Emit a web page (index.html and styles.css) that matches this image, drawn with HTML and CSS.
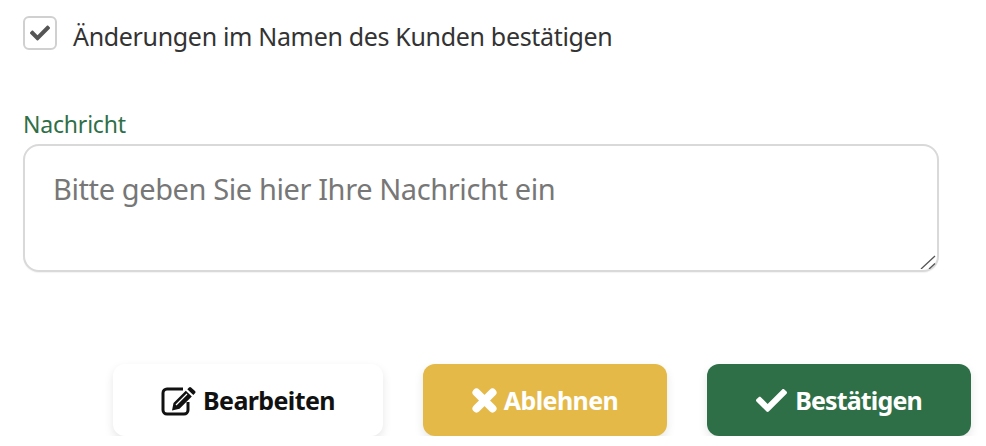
FILE: index.html
```html
<!DOCTYPE html>
<html lang="de">
<head>
    <title>Änderungen bestätigen</title>
    <link rel="stylesheet" href="styles.css">
</head>
<body>
    <label class="confirm-row">
        <span class="check-box">
            <svg viewBox="0 0 512 512" width="20" height="20"><path fill="#555" d="M173.900 439.400 7.500 273c-10-10-10-26.200 0-36.200l36.200-36.200c10-10 26.200-10 36.200 0L192 312.700 432.100 72.600c10-10 26.200-10 36.200 0l36.200 36.200c10 10 10 26.200 0 36.200L210.100 439.400c-10 10-26.200 10-36.200 0z"/></svg>
        </span>
        <span class="confirm-text">Änderungen im Namen des Kunden bestätigen</span>
    </label>

    <div class="message-field">
        <label class="field-label" for="message">Nachricht</label>
        <div class="textarea-wrap">
            <textarea id="message" placeholder="Bitte geben Sie hier Ihre Nachricht ein"></textarea>
            <svg class="grip" viewBox="0 0 16 14" width="16" height="14"><path stroke="#555" stroke-width="1.300" d="M1 14 15 1M9 14l6-5.500"/></svg>
        </div>
    </div>

    <div class="actions">
        <button class="btn btn-edit">
            <svg viewBox="0 0 35 31" width="35" height="31">
                <path fill="none" stroke="#111" stroke-width="3" d="M22 4H6a4 4 0 0 0-4 4v17a4 4 0 0 0 4 4h17a4 4 0 0 0 4-4V17"/>
                <path fill="#111" d="M28 2.500a1.500 1.500 0 0 1 2.100 0l3.900 3.600a1.500 1.500 0 0 1 0 2.100l-1.700 1.700-6-5.700zM24.800 5.700l6 5.700L18.500 23.700l-7.500 1.800 1.500-7.500z"/>
                <path stroke="#fff" stroke-width="1.200" d="M15 20 26 9"/>
            </svg>
            Bearbeiten
        </button>
        <button class="btn btn-reject">
            <svg viewBox="0 0 25 25" width="25" height="25"><path stroke="#fff" stroke-width="8" stroke-linecap="round" d="M4.500 4.500l16 16M20.500 4.500l-16 16"/></svg>
            Ablehnen
        </button>
        <button class="btn btn-confirm">
            <svg viewBox="0 0 512 512" width="31" height="31"><path fill="#fff" d="M173.900 439.400 7.500 273c-10-10-10-26.200 0-36.200l36.200-36.200c10-10 26.200-10 36.200 0L192 312.700 432.100 72.600c10-10 26.200-10 36.200 0l36.200 36.200c10 10 10 26.200 0 36.200L210.100 439.400c-10 10-26.200 10-36.200 0z"/></svg>
            Bestätigen
        </button>
    </div>
</body>
</html>
```

FILE: styles.css
```css
:root {
    --green: #2f6f47;
    --yellow: #e4b947;
    --text-color: #333333;
    --border-color: #d9d9d9;
}

body {
    font-family: "Noto Sans", "Open Sans", sans-serif;
    color: var(--text-color);
    margin: 0;
    padding: 16px 15px 0 23px;
    background-color: #FFF;
}

.confirm-row {
    display: flex;
    align-items: center;
    gap: 16px;
    height: 34px;
}

.check-box {
    width: 34px;
    height: 34px;
    box-sizing: border-box;
    border: 2px solid #d0d0d0;
    border-radius: 6px;
    display: flex;
    align-items: center;
    justify-content: center;
}

.confirm-text {
    font-size: 25px;
    letter-spacing: -0.33px;
    white-space: nowrap;
    padding-top: 5px;
}

.message-field {
    margin-top: 59px;
    width: 916px;
}

.field-label {
    display: block;
    color: var(--green);
    font-size: 23px;
    letter-spacing: -0.2px;
    line-height: 30px;
}

.textarea-wrap {
    position: relative;
    margin-top: 5px;
}

textarea {
    display: block;
    width: 100%;
    height: 128px;
    box-sizing: border-box;
    padding: 25px 28px;
    border: 2px solid var(--border-color);
    border-radius: 16px;
    outline: none;
    resize: none;
    font-family: inherit;
    font-size: 29px;
    letter-spacing: -0.4px;
    line-height: 36px;
    box-shadow: 0 1px 1px rgba(0,0,0,0.05);
}

textarea::placeholder {
    color: #777777;
}

.grip {
    position: absolute;
    right: 3px;
    bottom: 3px;
}

.actions {
    display: flex;
    justify-content: flex-end;
    gap: 40px;
    width: 948px;
    margin-top: 92px;
}

.btn {
    display: flex;
    align-items: center;
    justify-content: center;
    gap: 7px;
    height: 72px;
    border: none;
    border-radius: 12px;
    font-family: inherit;
    font-size: 25px;
    font-weight: 700;
    letter-spacing: -0.6px;
    box-shadow: 0 4px 10px rgba(0,0,0,0.1);
    cursor: pointer;
}

.btn-edit {
    width: 270px;
    background-color: #FFF;
    color: #111;
}

.btn-reject {
    width: 244px;
    background-color: var(--yellow);
    color: #FFF;
}

.btn-confirm {
    width: 264px;
    background-color: var(--green);
    color: #FFF;
    letter-spacing: -0.85px;
    gap: 8px;
}
```
